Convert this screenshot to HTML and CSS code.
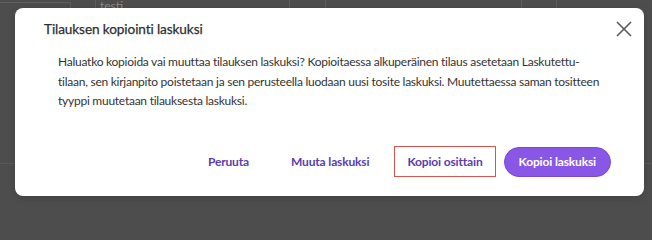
FILE: index.html
```html
<!DOCTYPE html>
<html lang="fi">
<head>
<meta charset="utf-8">
<title>Tilauksen kopiointi laskuksi</title>
<link rel="stylesheet" href="styles.css">
</head>
<body>
<div class="backdrop">
  <div class="grid-row top">
    <div class="cell c1"></div>
    <div class="cell c2"></div>
    <div class="cell c3"><span class="cell-text">testi</span></div>
    <div class="cell c4"></div>
    <div class="cell c5"></div>
    <div class="cell c6"></div>
    <div class="cell c7"></div>
  </div>
  <div class="grid-row mid"></div>
  <div class="grid-row low"></div>
</div>

<div class="modal" role="dialog" aria-labelledby="modal-title">
  <div class="modal-header">
    <h2 id="modal-title" class="modal-title">Tilauksen kopiointi laskuksi</h2>
    <button class="close-btn" aria-label="Sulje">
      <svg width="16" height="16" viewBox="0 0 16 16"><path d="M1 1 L15 15 M15 1 L1 15" stroke="#5a5a5a" stroke-width="1.6" fill="none"/></svg>
    </button>
  </div>
  <p class="modal-body">Haluatko kopioida vai muuttaa tilauksen laskuksi? Kopioitaessa alkuperäinen tilaus asetetaan Laskutettu-<wbr>tilaan, sen kirjanpito poistetaan ja sen perusteella luodaan uusi tosite laskuksi. Muutettaessa saman tositteen tyyppi muutetaan tilauksesta laskuksi.</p>
  <div class="modal-footer">
    <button class="btn btn-text">Peruuta</button>
    <button class="btn btn-text">Muuta laskuksi</button>
    <button class="btn btn-text btn-outlined">Kopioi osittain</button>
    <button class="btn btn-primary">Kopioi laskuksi</button>
  </div>
</div>
</body>
</html>
```

FILE: styles.css
```css
html, body {
  margin: 0;
  padding: 0;
  background: #4d4d4d;
  font-family: "Lato", "Noto Sans", sans-serif;
}

body {
  width: 652px;
  height: 204px;
  overflow: hidden;
}

.backdrop {
  display: flex;
  flex-direction: column;
  height: 204px;
}

.grid-row {
  display: flex;
}

.grid-row.top {
  height: 22px;
}

.cell {
  border-right: 1px solid #5e5e5e;
  box-sizing: border-box;
}

.c1 { width: 71px; border-top: 1px solid #606060; margin-top: 2px; }
.c2 { width: 25px; }
.c3 { width: 194px; }
.c4 { width: 36px; }
.c5 { width: 196px; }
.c6 { width: 35px; }
.c7 { flex: 1; border-right: none; }

.cell-text {
  display: block;
  color: #8a8a8a;
  font-size: 12px;
  line-height: 12px;
  margin-left: 4px;
}

.grid-row.mid {
  height: 141px;
  border-bottom: 1px solid #5a5a5a;
}

.grid-row.low {
  flex: 1;
}

.modal {
  position: absolute;
  left: 15px;
  top: 8px;
  width: 629px;
  height: 188px;
  background: #fff;
  border-radius: 8px;
  box-sizing: border-box;
  display: flex;
  flex-direction: column;
  box-shadow: 0 2px 8px rgba(0, 0, 0, 0.15);
}

.modal-header {
  display: flex;
  align-items: center;
  justify-content: space-between;
  padding: 11px 12px 0 29px;
  height: 20px;
}

.modal-title {
  margin: 0;
  font-size: 13.6px;
  font-weight: 400;
  letter-spacing: -0.1px;
  color: #2e2e2e;
  line-height: 20px;
  -webkit-text-stroke: 0.25px #2e2e2e;
}

.close-btn {
  background: none;
  border: none;
  padding: 0;
  width: 16px;
  height: 16px;
  display: flex;
  align-items: center;
  justify-content: center;
}

.modal-body {
  margin: 13px 0 0 43px;
  width: 548px;
  font-size: 12px;
  letter-spacing: -0.25px;
  line-height: 19.5px;
  color: #333;
}

.modal-footer {
  display: flex;
  justify-content: flex-end;
  align-items: center;
  gap: 8px;
  margin-top: auto;
  padding: 0 33px 19px 0;
}

.btn {
  font-family: inherit;
  font-size: 12px;
  font-weight: 700;
  letter-spacing: -0.15px;
  height: 30px;
  padding: 0 16px;
  border: 1px solid transparent;
  background: none;
  cursor: pointer;
  line-height: 28px;
}

.btn-text {
  color: #5b3bb0;
}

.btn-outlined {
  border: 1px solid #d9534f;
  padding: 0 12px;
  height: 31px;
}

.btn-primary {
  background: #8956e6;
  color: #fff;
  border-radius: 15px;
  padding: 0 14px;
  border-color: #7a48d6;
}
```
